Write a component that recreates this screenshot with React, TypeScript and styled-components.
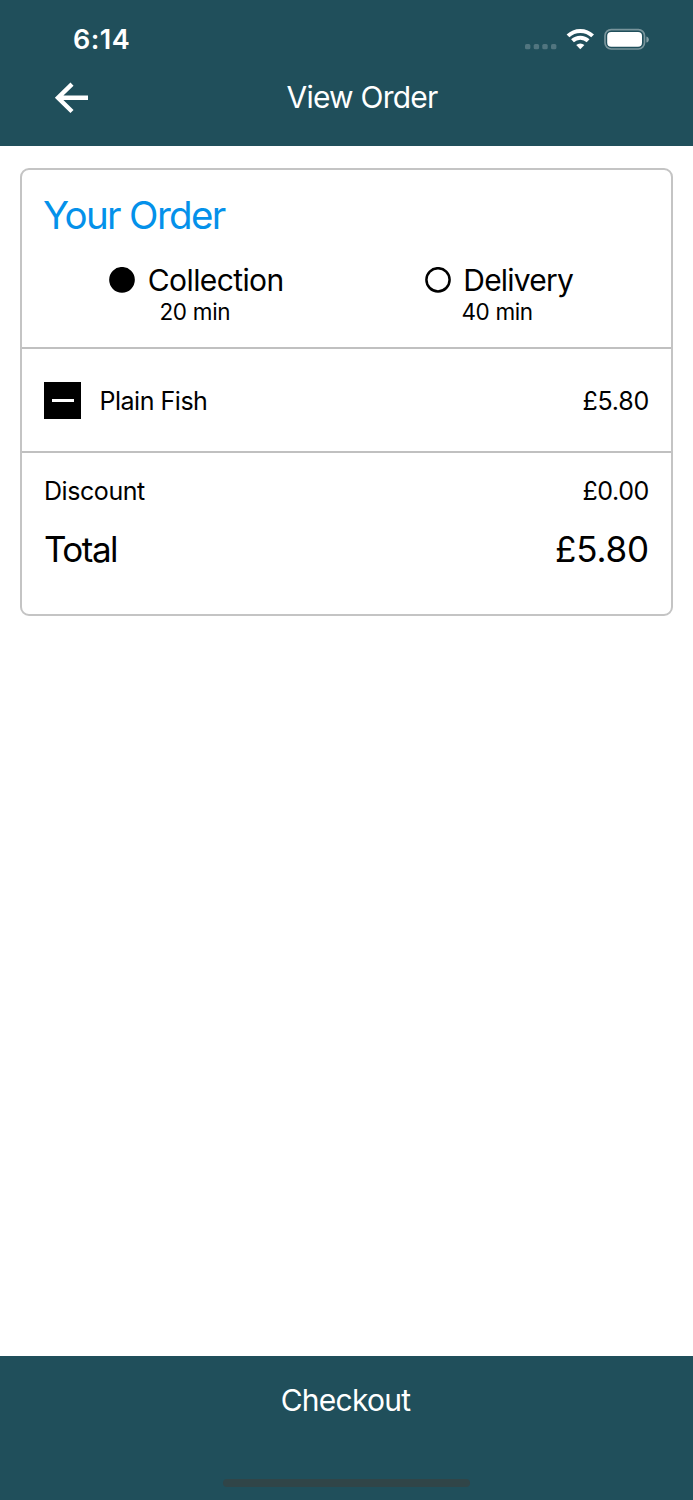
import React from "react";
import styled, { createGlobalStyle } from "styled-components";

const GlobalStyle = createGlobalStyle`
  * { box-sizing: border-box; }
  body { margin: 0; background: #fff; font-family: Inter, "Liberation Sans", sans-serif; }
`;

const Screen = styled.div`
  display: flex;
  flex-direction: column;
  height: 1500px;
  background: #fff;
  color: #000;
`;

const Label = styled.span<{ $size: number; $track?: number; $weight?: number }>`
  font-size: ${(p) => p.$size}px;
  letter-spacing: ${(p) => p.$track ?? 0}px;
  font-weight: ${(p) => p.$weight ?? 400};
  line-height: 1.2;
  white-space: nowrap;
`;

const Header = styled.header`
  height: 146px;
  background: #204f5b;
  color: #fff;
`;

const StatusBar = styled.div`
  display: flex;
  align-items: center;
  justify-content: space-between;
  height: 79px;
  padding: 0 43px 0 73px;
`;

const Clock = styled.div`
  display: flex;
  padding-top: 2px;
`;

const StatusIcons = styled.svg`
  display: block;
  width: 126px;
  height: 24px;
`;

const NavBar = styled.div`
  display: grid;
  grid-template-columns: 100px 1fr 100px;
  align-items: center;
  height: 37px;
`;

const BackButton = styled.button`
  display: flex;
  padding: 0 0 0 54px;
  border: 0;
  background: none;
  color: #fff;
`;

const NavTitle = styled.h1`
  display: flex;
  justify-content: center;
  margin: 0;
  padding: 0 0 2px 31px;
`;

const Content = styled.main`
  flex: 1;
  padding: 22px 20px 0;
`;

const Card = styled.section`
  height: 448px;
  border: 2px solid #c4c4c4;
  border-radius: 9px;
`;

const OrderHeading = styled.div`
  display: flex;
  flex-direction: column;
  height: 179px;
  border-bottom: 2px solid #c0c0c0;
`;

const HeadingTitle = styled.h2`
  display: flex;
  align-items: center;
  height: 48px;
  margin: 21px 0 0 21px;
  color: #0491ea;
`;

const Options = styled.div`
  display: grid;
  grid-template-columns: 315.5px 1fr;
  margin-top: 22px;
  padding-left: 87.4px;
`;

const Option = styled.div`
  display: flex;
  flex-direction: column;
`;

const OptionRow = styled.div`
  display: flex;
  align-items: center;
  height: 37px;
  gap: 12.4px;
`;

const OptionName = styled.div`
  display: flex;
  padding-top: 1px;
`;

const Radio = styled.svg`
  display: block;
  width: 26px;
  height: 26px;
`;

const OptionTime = styled.div<{ $indent: number }>`
  display: flex;
  align-items: center;
  height: 27px;
  padding-left: ${(p) => p.$indent}px;
`;

const ItemRow = styled.div`
  display: flex;
  align-items: center;
  height: 104px;
  padding: 0 22px;
  border-bottom: 2px solid #c0c0c0;
`;

const RemoveButton = styled.button`
  display: flex;
  align-items: center;
  justify-content: center;
  width: 37px;
  height: 37px;
  margin-right: 18px;
  padding: 0;
  border: 0;
  background: #000;
`;

const Minus = styled.span`
  width: 22px;
  height: 3px;
  background: #fff;
`;

const ItemText = styled.div`
  display: flex;
  flex: 1;
  padding-top: 2px;
  padding-left: 0.5px;
`;

const Price = styled.div`
  display: flex;
  margin-left: auto;
`;

const Totals = styled.div`
  padding: 18px 22px 0;
`;

const TotalRow = styled.div<{ $height: number }>`
  display: flex;
  align-items: center;
  height: ${(p) => p.$height}px;
`;

const Footer = styled.footer`
  display: flex;
  flex-direction: column;
  align-items: center;
  height: 144px;
  background: #204f5b;
`;

const CheckoutButton = styled.button`
  display: flex;
  align-items: center;
  justify-content: center;
  width: 100%;
  height: 88px;
  padding: 0 2px 0 0;
  border: 0;
  background: none;
  color: #fff;
  font-family: inherit;
`;

const HomeIndicator = styled.div`
  width: 247px;
  height: 8px;
  margin-top: 35px;
  border-radius: 4px;
  background: #304548;
`;

function RadioMark({ checked = false }: { checked?: boolean }) {
  return (
    <Radio viewBox="0 0 26 26">
      <circle cx="13" cy="12.8" r="11.6" fill={checked ? "#000" : "#fff"} stroke="#000" strokeWidth="2.5" />
    </Radio>
  );
}

export default function App() {
  return (
    <Screen>
      <GlobalStyle />
      <Header>
        <StatusBar>
          <Clock><Label $size={27} $weight={600} $track={0.45}>6:14</Label></Clock>
          <StatusIcons viewBox="0 0 126 24">
            <g fill="#fff" fillOpacity="0.22">
              <rect x="1" y="15.9" width="5.4" height="5.4" rx="1.6" />
              <rect x="9.7" y="15.9" width="5.4" height="5.4" rx="1.6" />
              <rect x="18.3" y="15.9" width="5.4" height="5.4" rx="1.6" />
              <rect x="27" y="15.9" width="5.4" height="5.4" rx="1.6" />
            </g>
            <g fill="none" stroke="#fff" strokeWidth="4">
              <path d="M44 7.9a17.6 17.6 0 0 1 24.6 0" />
              <path d="M48.5 12.8a11.2 11.2 0 0 1 15.6 0" />
            </g>
            <path d="M52.2 17a6 6 0 0 1 8.2 0l-4.1 4.3z" fill="#fff" />
            <rect x="81" y="1.6" width="39.5" height="19.4" rx="6.2" fill="none" stroke="#fff" strokeOpacity="0.4" strokeWidth="1.7" />
            <rect x="83.2" y="3.9" width="34.8" height="14.9" rx="4" fill="#fff" />
            <path d="M122.4 8.4c3.3 1.2 3.3 5 0 6.2z" fill="#fff" fillOpacity="0.45" />
          </StatusIcons>
        </StatusBar>
        <NavBar>
          <BackButton aria-label="Back">
            <svg width="36" height="34" viewBox="0 0 36 34" fill="none" stroke="#fff" strokeWidth="4.4">
              <path d="M34 16.7H4M18 3.1L4 16.7l14 13.8" />
            </svg>
          </BackButton>
          <NavTitle><Label $size={30} $track={-0.78}>View Order</Label></NavTitle>
        </NavBar>
      </Header>
      <Content>
        <Card>
          <OrderHeading>
            <HeadingTitle><Label $size={38.5} $track={-1.65}>Your Order</Label></HeadingTitle>
            <Options>
              <Option>
                <OptionRow><RadioMark checked /><OptionName><Label $size={30} $track={-0.6}>Collection</Label></OptionName></OptionRow>
                <OptionTime $indent={50}><Label $size={22.5} $track={-0.3}>20 min</Label></OptionTime>
              </Option>
              <Option>
                <OptionRow><RadioMark /><OptionName><Label $size={30} $track={-0.8}>Delivery</Label></OptionName></OptionRow>
                <OptionTime $indent={36.5}><Label $size={22.5} $track={-0.35}>40 min</Label></OptionTime>
              </Option>
            </Options>
          </OrderHeading>
          <ItemRow>
            <RemoveButton aria-label="Remove item"><Minus /></RemoveButton>
            <ItemText>
              <Label $size={25} $track={-0.48}>Plain Fish</Label>
              <Price><Label $size={25} $track={-0.25}>£5.80</Label></Price>
            </ItemText>
          </ItemRow>
          <Totals>
            <TotalRow $height={40}>
              <Label $size={25} $track={-0.43}>Discount</Label>
              <Price><Label $size={25} $track={-0.4}>£0.00</Label></Price>
            </TotalRow>
            <TotalRow $height={76}>
              <Label $size={35} $track={-1.5}>Total</Label>
              <Price><Label $size={35} $track={-0.15}>£5.80</Label></Price>
            </TotalRow>
          </Totals>
        </Card>
      </Content>
      <Footer>
        <CheckoutButton><Label $size={30} $track={-0.75}>Checkout</Label></CheckoutButton>
        <HomeIndicator />
      </Footer>
    </Screen>
  );
}
